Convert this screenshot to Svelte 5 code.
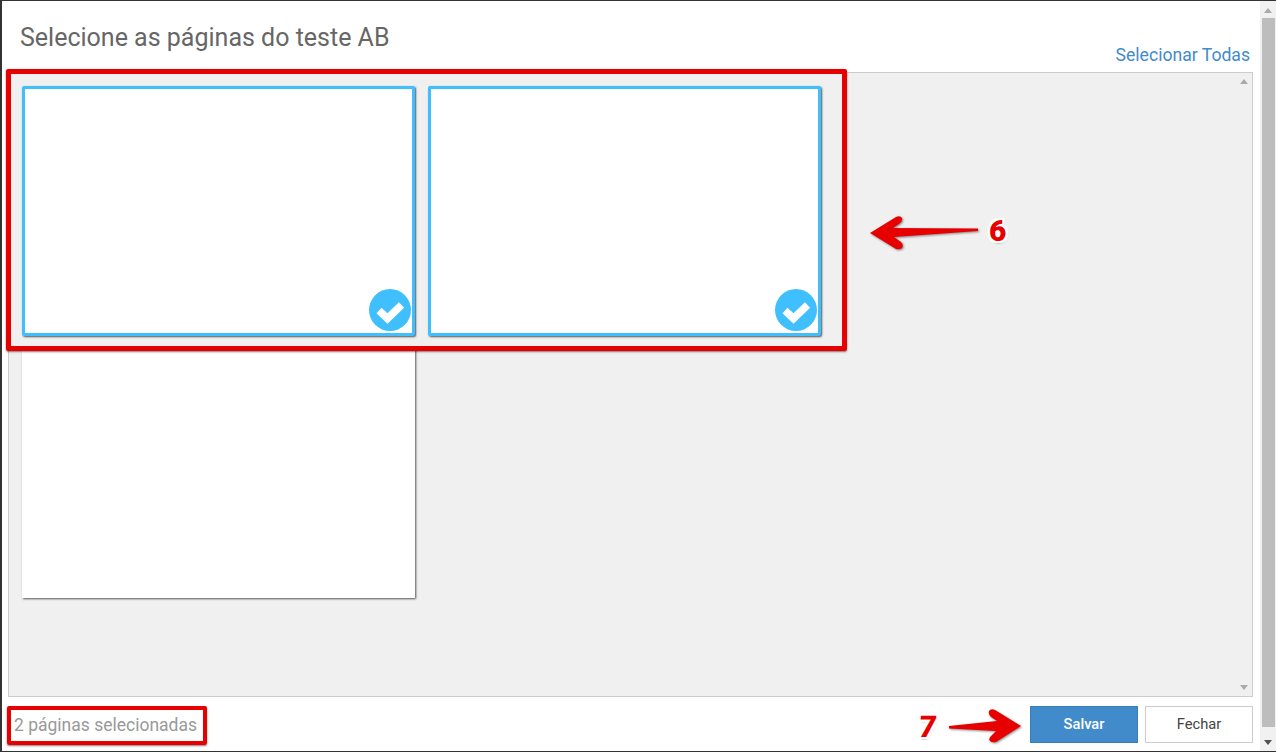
<script>
  const pages = [{ selected: true }, { selected: true }, { selected: false }];
  let count = pages.filter((p) => p.selected).length;
</script>

<div class="page">
  <div class="modal">
    <header>
      <h1>Selecione as páginas do teste AB</h1>
      <a href="#todas">Selecionar Todas</a>
    </header>

    <div class="panel">
      <div class="grid">
        {#each pages as page}
          <div class="card" class:selected={page.selected}>
            {#if page.selected}
              <svg class="check" viewBox="0 0 42 42">
                <circle cx="21" cy="21" r="21" fill="#40bfff" />
                <path d="M10 21.5 L18.5 29.5 L32.5 16" fill="none" stroke="#fff" stroke-width="7.5" />
              </svg>
            {/if}
          </div>
        {/each}
      </div>
      <span class="tri up"></span>
      <span class="tri down"></span>
    </div>

    <footer>
      <span class="count">{count} páginas selecionadas</span>
      <div class="buttons">
        <button class="save">Salvar</button>
        <button class="close">Fechar</button>
      </div>
    </footer>
  </div>

  <div class="scrollbar">
    <span class="tri up"></span>
    <div class="thumb"></div>
    <span class="tri down dark"></span>
  </div>

  <!-- tutorial annotations drawn over the screenshot -->
  <div class="mark mark-cards"></div>
  <div class="mark mark-count"></div>

  <svg class="arrow arrow-6" viewBox="0 0 108 34">
    <path d="M0 17 L26 1 Q30 -1 32 2 Q33 5 29 8 L23 12 L108 12.5 L108 15 L24 21 L31 26 Q34 29 32 32 Q30 34 26 33 Z" fill="#e60000" />
  </svg>
  <span class="num num-6">6</span>

  <svg class="arrow arrow-7" viewBox="0 0 72 34">
    <path d="M72 17 L46 1 Q42 -1 40 2 Q39 5 42 8 L48 12 L0 17 L0 19.5 L47 22 L42 27 Q39 30 41 32 Q43 34 47 33 Z" fill="#e60000" />
  </svg>
  <span class="num num-7">7</span>
</div>

<style>
  :global(body) {
    margin: 0;
    background: #fff;
  }
  .page {
    position: relative;
    display: flex;
    width: 1276px;
    height: 752px;
    box-sizing: border-box;
    border-top: 1px solid #333;
    border-bottom: 1px solid #333;
    border-left: 2px solid #333;
    overflow: hidden;
    font-family: Roboto, "Liberation Sans", sans-serif;
    background: #fff;
  }
  .modal {
    flex: 1;
    display: flex;
    flex-direction: column;
    padding: 0 7px 0 6px;
    min-width: 0;
  }
  header {
    height: 71px;
    display: flex;
    justify-content: space-between;
    flex-shrink: 0;
  }
  h1 {
    margin: 23px 0 0 12px;
    font-size: 25px;
    line-height: 28px;
    font-weight: 400;
    color: #666;
  }
  header a {
    margin: 44px 3px 0 0;
    font-size: 17.6px;
    line-height: 21px;
    color: #428bca;
    text-decoration: none;
  }
  .panel {
    position: relative;
    height: 625px;
    box-sizing: border-box;
    border: 1px solid #ccc;
    background: #f0f0f0;
  }
  .grid {
    display: grid;
    grid-template-columns: repeat(2, 393px);
    grid-auto-rows: 250px;
    gap: 12px 13px;
    padding: 13px 13px;
  }
  .card {
    position: relative;
    box-sizing: border-box;
    background: #fff;
    box-shadow: 1px 1px 2px rgba(0, 0, 0, 0.65);
  }
  .card.selected {
    border: 3px solid #40bfff;
    border-radius: 2px;
  }
  .check {
    position: absolute;
    right: 1px;
    bottom: 2px;
    width: 42px;
    height: 42px;
  }
  .tri {
    position: absolute;
    right: 4px;
    width: 0;
    height: 0;
    border-left: 4px solid transparent;
    border-right: 4px solid transparent;
  }
  .tri.up {
    top: 6px;
    border-bottom: 5px solid #aaa;
  }
  .tri.down {
    bottom: 6px;
    border-top: 5px solid #aaa;
  }
  .tri.dark {
    border-top-color: #505050;
  }
  footer {
    flex: 1;
    display: flex;
    justify-content: space-between;
    align-items: center;
  }
  .count {
    margin: 2px 0 0 6px;
    font-size: 17.5px;
    color: #999;
  }
  .buttons {
    display: flex;
    gap: 7px;
  }
  button {
    width: 108px;
    height: 37px;
    box-sizing: border-box;
    font-family: inherit;
    font-size: 14.7px;
    border-radius: 0;
    padding: 0;
  }
  .save {
    background: #428bca;
    border: 1px solid #357ebd;
    color: #fff;
    font-weight: 500;
  }
  .close {
    background: #fff;
    border: 1px solid #ccc;
    color: #444;
  }
  .scrollbar {
    position: relative;
    width: 16px;
    flex-shrink: 0;
    background: #f1f1f1;
  }
  .scrollbar .tri.up {
    top: 7px;
  }
  .thumb {
    position: absolute;
    top: 17px;
    left: 2px;
    right: 1px;
    height: 709px;
    background: #bdbdbd;
  }
  .mark {
    position: absolute;
    box-sizing: border-box;
    border: 5px solid #e60000;
    border-radius: 2px;
    box-shadow: 0 1px 2px rgba(0, 0, 0, 0.5);
  }
  .mark-cards {
    left: 4px;
    top: 68px;
    width: 841px;
    height: 282px;
  }
  .mark-count {
    left: 5px;
    top: 705px;
    width: 200px;
    height: 39px;
    border-width: 4px;
  }
  .arrow {
    position: absolute;
    filter: drop-shadow(1px 1px 1px rgba(0, 0, 0, 0.45));
  }
  .arrow-6 {
    left: 868px;
    top: 215px;
    width: 108px;
    height: 34px;
  }
  .arrow-7 {
    left: 947px;
    top: 708px;
    width: 72px;
    height: 34px;
  }
  .num {
    position: absolute;
    font-family: Roboto, "DejaVu Sans", sans-serif;
    font-weight: 900;
    font-size: 30px;
    line-height: 30px;
    color: #e60000;
    text-shadow: -2px 0 #fff, 2px 0 #fff, 0 -2px #fff, 0 2px #fff, -2px -2px #fff, 2px 2px #fff, -2px 2px #fff, 2px -2px #fff, 1px 2px 2px #777;
  }
  .num-6 {
    left: 987px;
    top: 215px;
  }
  .num-7 {
    left: 917px;
    top: 711px;
    transform: skewX(-6deg);
  }
</style>
